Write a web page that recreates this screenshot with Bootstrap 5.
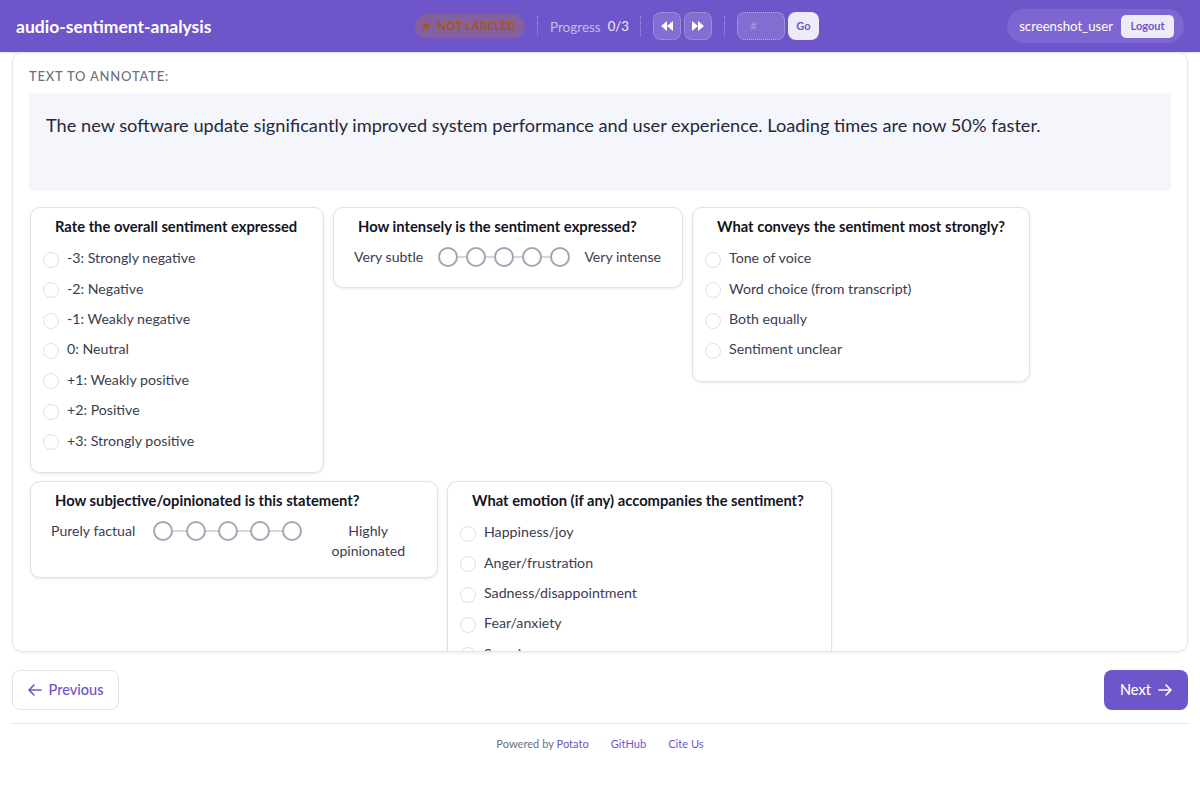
<!DOCTYPE html>
<html lang="en">
<head>
    <meta charset="UTF-8">
    <meta name="viewport" content="width=device-width, initial-scale=1.0">
    <title>audio-sentiment-analysis</title>
    <link href="https://cdn.jsdelivr.net/npm/bootstrap@5.3.0/dist/css/bootstrap.min.css" rel="stylesheet">
    <script src="https://cdn.jsdelivr.net/npm/bootstrap@5.3.0/dist/js/bootstrap.bundle.min.js"></script>
    <style>
        html, body { height: 100%; }
        body {
            margin: 0;
            background: #fff;
            color: #33354a;
            font-family: "Lato", "Liberation Sans", sans-serif;
            overflow: hidden;
        }
        .top-bar {
            height: 52px;
            background: #6e55c9;
            color: #fff;
            padding: 0 16px;
            box-shadow: 0 1px 2px rgba(0,0,0,.12);
        }
        .app-title { font-size: 17.5px; font-weight: 700; width: 399px; padding-top: 2px; }
        .status-pill {
            height: 24px;
            width: 110px;
            border-radius: 12px;
            background: #85609f;
            color: #a8560f;
            font-size: 11.2px;
            font-weight: 700;
            letter-spacing: .4px;
        }
        .status-dot { width: 6px; height: 6px; border-radius: 50%; background: #a8560f; }
        .bar-sep { width: 0; height: 20px; border-left: 1px dotted rgba(255,255,255,.4); margin: 0 12px; }
        .sep-near { margin-left: 11px; }
        .progress-label { font-size: 13.5px; color: #c5bbe9; padding-top: 2px; }
        .progress-count { font-size: 13.2px; color: #f0edfa; margin-left: 7px; padding-top: 2px; }
        .jump-btn {
            width: 28px;
            height: 28px;
            border-radius: 8px;
            background: rgba(255,255,255,.15);
            border: 1px dotted rgba(255,255,255,.4);
        }
        .jump-input {
            width: 48px;
            height: 28px;
            border-radius: 8px;
            background: rgba(255,255,255,.14);
            border: 1px dotted rgba(255,255,255,.45);
            color: #a99be0;
            font-size: 12px;
            padding-left: 12px;
        }
        .go-btn {
            width: 31px;
            height: 28px;
            border-radius: 8px;
            background: #eeebf9;
            color: #6e55c9;
            font-size: 11px;
            font-weight: 700;
        }
        .gap-tight { gap: 3px; }
        .user-pill {
            height: 34px;
            border-radius: 17px;
            background: #7d66d1;
            padding: 0 10px 0 12px;
            font-size: 13.2px;
            gap: 8px;
        }
        .user-name { padding-top: 2px; }
        .logout-btn {
            height: 23px;
            width: 53px;
            border-radius: 5px;
            background: #eeebf9;
            color: #6e55c9;
            font-size: 11px;
            font-weight: 700;
        }
        .main-panel {
            height: 600px;
            margin: 0 12px;
            padding: 15px 16px 0 16px;
            border: 1px solid #e4e5ec;
            border-radius: 10px;
            box-shadow: 0 1px 3px rgba(30,30,60,.08);
            overflow: hidden;
        }
        .section-label {
            font-size: 13px;
            font-weight: 500;
            letter-spacing: .8px;
            color: #6c7080;
            line-height: 16px;
            margin-bottom: 9px;
        }
        .text-box {
            height: 98px;
            background: #f5f6fb;
            border-radius: 4px;
            padding: 20px 17px;
            font-size: 18.2px;
            line-height: 24px;
            color: #26283a;
        }
        .form-grid { margin-top: 16px; padding-left: 1px; column-gap: 9px; row-gap: 8px; }
        .ann-card {
            background: #fff;
            border: 1px solid #e0e1e9;
            border-radius: 10px;
            box-shadow: 0 1px 3px rgba(30,30,60,.1);
            padding: 8px 13px 9px 12px;
        }
        .ann-title {
            font-size: 14.75px;
            font-weight: 700;
            color: #14151f;
            line-height: 20px;
            margin: 0 0 6.7px 12px;
            white-space: nowrap;
        }
        .scale-title { margin-bottom: 11px; }
        .w-sentiment { width: 294px; height: 266px; }
        .w-intensity { width: 350px; height: 81px; }
        .w-conveys { width: 338px; height: 175px; }
        .w-subjective { width: 408px; height: 97px; }
        .w-emotion { width: 385px; height: 260px; }
        .opt-row { height: 30.4px; font-size: 14.2px; gap: 8px; color: #3b3d50; }
        .opt-dot {
            width: 16px;
            height: 16px;
            border-radius: 50%;
            border: 1px solid #dfe0e6;
            background: #fff;
            margin-top: 4px;
            flex: none;
        }
        .scale-row { font-size: 14.1px; line-height: 20px; color: #3b3d50; }
        .scale-dots { gap: 8px; }
        .scale-dot {
            width: 20px;
            height: 20px;
            border-radius: 50%;
            border: 2px solid #a3a6b5;
            background: #fff;
            position: relative;
        }
        .scale-dot + .scale-dot::before {
            content: "";
            position: absolute;
            left: -10px;
            top: 7px;
            width: 8px;
            height: 2px;
            background: #d5d6de;
        }
        .scale-wide { gap: 12.3px; }
        .scale-wide .scale-dot + .scale-dot::before { left: -14.3px; width: 12.3px; }
        .scale-left-gap { gap: 18px; }
        .nav-row { margin: 18px 12px 0; }
        .prev-btn, .next-btn {
            height: 40px;
            border-radius: 8px;
            font-size: 14.5px;
            font-weight: 500;
            gap: 7px;
            padding: 0;
        }
        .prev-btn { width: 107px; border: 1px solid #e2e3e9; color: #6e55c9; background: #fff; }
        .next-btn { width: 84px; background: #6e55c9; color: #fff; border: 0; }
        .page-foot {
            margin: 13px 12px 0;
            padding-top: 13px;
            border-top: 1px solid #e6e7ec;
            font-size: 11.1px;
            line-height: 14px;
            color: #6c7080;
            gap: 10px;
        }
        .page-foot a { color: #6e55c9; text-decoration: none; }
        .foot-sep { width: 2px; height: 2px; border-radius: 50%; background: #ecedf1; }
    </style>
</head>
<body>
    <div class="top-bar d-flex align-items-center">
        <div class="app-title">audio-sentiment-analysis</div>
        <div class="status-pill d-flex align-items-center justify-content-center gap-2"><span class="status-dot"></span>NOT LABELED</div>
        <div class="bar-sep"></div>
        <span class="progress-label">Progress</span><span class="progress-count">0/3</span>
        <div class="bar-sep sep-near"></div>
        <div class="d-flex gap-tight">
            <div class="jump-btn d-flex align-items-center justify-content-center">
                <svg width="12" height="10" viewBox="0 0 12 10"><path fill="#fff" d="M6 0v10L0 5zM12 0v10L6 5z"/></svg>
            </div>
            <div class="jump-btn d-flex align-items-center justify-content-center">
                <svg width="12" height="10" viewBox="0 0 12 10"><path fill="#fff" d="M0 0v10l6-5zM6 0v10l6-5z"/></svg>
            </div>
        </div>
        <div class="bar-sep"></div>
        <div class="d-flex gap-tight">
            <div class="jump-input d-flex align-items-center">#</div>
            <div class="go-btn d-flex align-items-center justify-content-center">Go</div>
        </div>
        <div class="user-pill d-flex align-items-center ms-auto">
            <span class="user-name">screenshot_user</span>
            <div class="logout-btn d-flex align-items-center justify-content-center">Logout</div>
        </div>
    </div>

    <div class="main-panel">
        <div class="section-label">TEXT TO ANNOTATE:</div>
        <div class="text-box">The new software update significantly improved system performance and user experience. Loading times are now 50% faster.</div>
        <div class="form-grid d-flex flex-wrap align-items-start">
            <div class="ann-card w-sentiment">
                <div class="ann-title">Rate the overall sentiment expressed</div>
                <div class="opt-row d-flex align-items-center"><span class="opt-dot"></span>-3: Strongly negative</div>
                <div class="opt-row d-flex align-items-center"><span class="opt-dot"></span>-2: Negative</div>
                <div class="opt-row d-flex align-items-center"><span class="opt-dot"></span>-1: Weakly negative</div>
                <div class="opt-row d-flex align-items-center"><span class="opt-dot"></span>0: Neutral</div>
                <div class="opt-row d-flex align-items-center"><span class="opt-dot"></span>+1: Weakly positive</div>
                <div class="opt-row d-flex align-items-center"><span class="opt-dot"></span>+2: Positive</div>
                <div class="opt-row d-flex align-items-center"><span class="opt-dot"></span>+3: Strongly positive</div>
            </div>
            <div class="ann-card w-intensity">
                <div class="ann-title scale-title">How intensely is the sentiment expressed?</div>
                <div class="scale-row d-flex align-items-center justify-content-between px-2">
                    <span>Very subtle</span>
                    <div class="scale-dots d-flex">
                        <span class="scale-dot"></span><span class="scale-dot"></span><span class="scale-dot"></span><span class="scale-dot"></span><span class="scale-dot"></span>
                    </div>
                    <span>Very intense</span>
                </div>
            </div>
            <div class="ann-card w-conveys">
                <div class="ann-title">What conveys the sentiment most strongly?</div>
                <div class="opt-row d-flex align-items-center"><span class="opt-dot"></span>Tone of voice</div>
                <div class="opt-row d-flex align-items-center"><span class="opt-dot"></span>Word choice (from transcript)</div>
                <div class="opt-row d-flex align-items-center"><span class="opt-dot"></span>Both equally</div>
                <div class="opt-row d-flex align-items-center"><span class="opt-dot"></span>Sentiment unclear</div>
            </div>
            <div class="ann-card w-subjective">
                <div class="ann-title scale-title">How subjective/opinionated is this statement?</div>
                <div class="scale-row scale-left-gap d-flex align-items-start px-2">
                    <span>Purely factual</span>
                    <div class="scale-dots scale-wide d-flex">
                        <span class="scale-dot"></span><span class="scale-dot"></span><span class="scale-dot"></span><span class="scale-dot"></span><span class="scale-dot"></span>
                    </div>
                    <span class="flex-grow-1 text-center">Highly<br>opinionated</span>
                </div>
            </div>
            <div class="ann-card w-emotion">
                <div class="ann-title">What emotion (if any) accompanies the sentiment?</div>
                <div class="opt-row d-flex align-items-center"><span class="opt-dot"></span>Happiness/joy</div>
                <div class="opt-row d-flex align-items-center"><span class="opt-dot"></span>Anger/frustration</div>
                <div class="opt-row d-flex align-items-center"><span class="opt-dot"></span>Sadness/disappointment</div>
                <div class="opt-row d-flex align-items-center"><span class="opt-dot"></span>Fear/anxiety</div>
                <div class="opt-row d-flex align-items-center"><span class="opt-dot"></span>Surprise</div>
            </div>
        </div>
    </div>

    <div class="nav-row d-flex justify-content-between">
        <button type="button" class="btn prev-btn d-flex align-items-center justify-content-center">
            <svg width="14" height="12" viewBox="0 0 14 12" fill="none" stroke="#6e55c9" stroke-width="1.6" stroke-linecap="round" stroke-linejoin="round"><path d="M13 6H1M6 1L1 6l5 5"/></svg>Previous
        </button>
        <button type="button" class="btn next-btn d-flex align-items-center justify-content-center">Next
            <svg width="14" height="12" viewBox="0 0 14 12" fill="none" stroke="#fff" stroke-width="1.6" stroke-linecap="round" stroke-linejoin="round"><path d="M1 6h12M8 1l5 5-5 5"/></svg>
        </button>
    </div>

    <div class="page-foot d-flex justify-content-center align-items-center">
        <span>Powered by <a href="#">Potato</a></span>
        <span class="foot-sep"></span>
        <a href="#">GitHub</a>
        <span class="foot-sep"></span>
        <a href="#">Cite Us</a>
    </div>
</body>
</html>
